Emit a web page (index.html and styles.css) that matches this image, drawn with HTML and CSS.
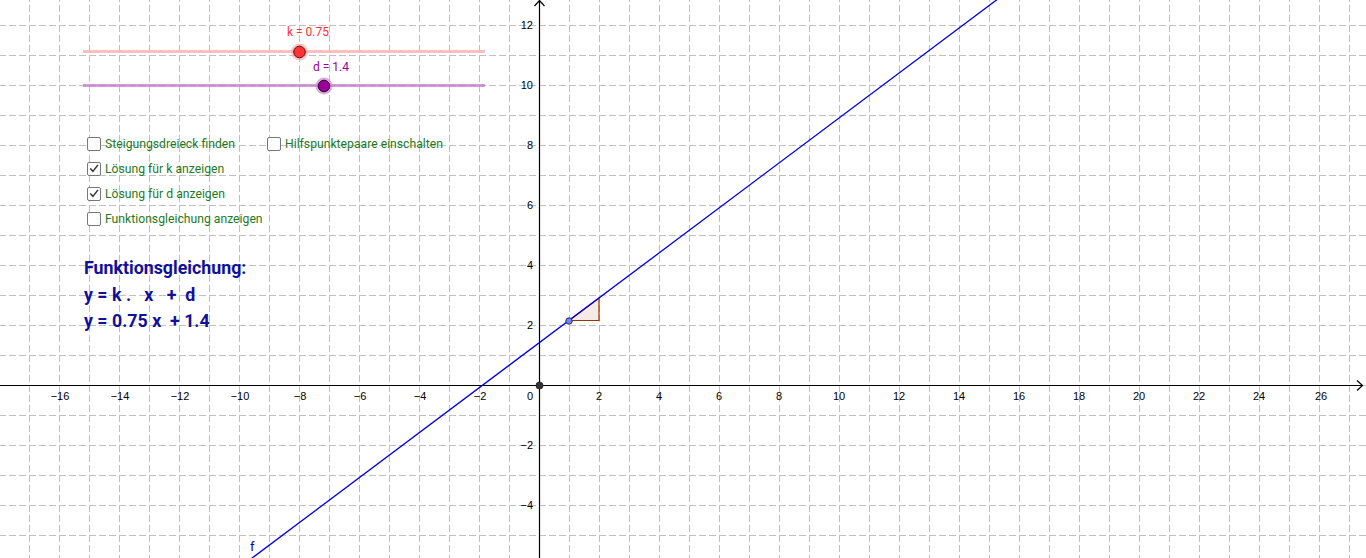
FILE: index.html
```html
<!DOCTYPE html>
<html lang="de">
<head>
<meta charset="utf-8">
<title>Lineare Funktion</title>
<link rel="stylesheet" href="styles.css">
</head>
<body>
<div class="stage">
  <svg class="graph" width="1366" height="558" viewBox="0 0 1366 558" xmlns="http://www.w3.org/2000/svg">
    <defs>
      <pattern id="grid" patternUnits="userSpaceOnUse" x="29" y="25" width="30" height="30">
        <line x1="0.5" y1="0" x2="0.5" y2="30" class="gridline"/>
        <line x1="0" y1="0.5" x2="30" y2="0.5" class="gridline"/>
      </pattern>
    </defs>
    <rect x="0" y="0" width="1366" height="558" fill="#fff"/>
    <rect x="0" y="0" width="1366" height="558" fill="url(#grid)"/>

    <!-- axes -->
    <line x1="0" y1="385.5" x2="1362" y2="385.5" class="axis"/>
    <polyline points="1357,380.5 1362.5,385.5 1357,390.5" class="arrow"/>
    <line x1="539.5" y1="558" x2="539.5" y2="1" class="axis"/>
    <polyline points="534.5,6 539.5,0.5 544.5,6" class="arrow"/>

    <!-- x labels -->
    <g class="xlab">
      <text x="60" y="400">−16</text>
      <text x="120" y="400">−14</text>
      <text x="180" y="400">−12</text>
      <text x="240" y="400">−10</text>
      <text x="300" y="400">−8</text>
      <text x="360" y="400">−6</text>
      <text x="420" y="400">−4</text>
      <text x="480" y="400">−2</text>
      <text x="599" y="400">2</text>
      <text x="659" y="400">4</text>
      <text x="719" y="400">6</text>
      <text x="779" y="400">8</text>
      <text x="839" y="400">10</text>
      <text x="899" y="400">12</text>
      <text x="959" y="400">14</text>
      <text x="1019" y="400">16</text>
      <text x="1079" y="400">18</text>
      <text x="1139" y="400">20</text>
      <text x="1199" y="400">22</text>
      <text x="1259" y="400">24</text>
      <text x="1321" y="400">26</text>
    </g>
    <g class="ylab">
      <text x="533" y="29">12</text>
      <text x="533" y="89">10</text>
      <text x="533" y="149">8</text>
      <text x="533" y="209">6</text>
      <text x="533" y="269">4</text>
      <text x="533" y="329">2</text>
      <text x="533" y="400">0</text>
      <text x="533" y="449">−2</text>
      <text x="533" y="509">−4</text>
    </g>

    <!-- slope triangle -->
    <polygon points="569,320.5 599,320.5 599,298" class="tri"/>

    <!-- function f -->
    <line x1="0" y1="747" x2="1366" y2="-277" class="fline"/>
    <text x="250" y="551" class="flabel">f</text>

    <!-- points -->
    <circle cx="569" cy="321" r="3.2" class="pt"/>
    <circle cx="539.5" cy="385.5" r="3.6" class="origin"/>

    <!-- sliders -->
    <line x1="83" y1="51.5" x2="485" y2="51.5" class="slk"/>
    <circle cx="299.5" cy="52" r="8.5" class="halok"/>
    <circle cx="299.5" cy="52" r="5.8" class="thumbk"/>
    <text x="287" y="36" class="labk">k = 0.75</text>

    <line x1="83" y1="85.5" x2="485" y2="85.5" class="sld"/>
    <circle cx="324" cy="86" r="8.5" class="halod"/>
    <circle cx="324" cy="86" r="5.8" class="thumbd"/>
    <text x="313" y="71" class="labd">d = 1.4</text>
  </svg>

  <div class="controls">
    <div class="row">
      <label class="cb"><span class="box"></span>Steigungsdreieck finden</label>
      <label class="cb second"><span class="box"></span>Hilfspunktepaare einschalten</label>
    </div>
    <div class="row">
      <label class="cb"><span class="box checked"><svg viewBox="0 0 13 13" width="13" height="13"><path d="M2.5 6.5 L5.3 9.6 L10.8 2.6"/></svg></span>Lösung für k anzeigen</label>
    </div>
    <div class="row">
      <label class="cb"><span class="box checked"><svg viewBox="0 0 13 13" width="13" height="13"><path d="M2.5 6.5 L5.3 9.6 L10.8 2.6"/></svg></span>Lösung für d anzeigen</label>
    </div>
    <div class="row">
      <label class="cb"><span class="box"></span>Funktionsgleichung anzeigen</label>
    </div>
  </div>

  <div class="equation">
    <div class="eqline">Funktionsgleichung:</div>
    <div class="eqline">y = k .   x   +  d</div>
    <div class="eqline">y = 0.75 x  + 1.4</div>
  </div>
</div>
</body>
</html>
```
FILE: styles.css
```css
html, body {
  margin: 0;
  padding: 0;
  background: #fff;
  overflow: hidden;
}
.stage {
  position: relative;
  width: 1366px;
  height: 558px;
  font-family: Roboto, "Liberation Sans", sans-serif;
}
.graph {
  display: block;
}
.gridline {
  stroke: #c0c0c0;
  stroke-width: 1;
  stroke-dasharray: 7 3;
}
.axis {
  stroke: #000;
  stroke-width: 1.2;
}
.arrow {
  fill: none;
  stroke: #000;
  stroke-width: 1.2;
}
.xlab text, .ylab text {
  font-family: "Liberation Sans", Arial, sans-serif;
  font-size: 11px;
  fill: #000;
}
.xlab text { text-anchor: middle; }
.ylab text { text-anchor: end; }
.tri {
  fill: rgba(153, 51, 0, 0.1);
  stroke: #993300;
  stroke-width: 1.2;
}
.fline {
  stroke: #0000dd;
  stroke-width: 1.3;
}
.flabel {
  font-family: Roboto, sans-serif;
  font-size: 13px;
  fill: #0000cc;
}
.pt {
  fill: #6f86ff;
  stroke: #2a2a55;
  stroke-width: 1;
}
.origin {
  fill: #333;
  stroke: #111;
  stroke-width: 0.6;
}
.slk {
  stroke: #ffa8a8;
  stroke-opacity: 0.75;
  stroke-width: 3;
}
.halok { fill: #ffaaaa; opacity: 0.7; }
.thumbk {
  fill: #ff3333;
  stroke: #5a1010;
  stroke-width: 1;
}
.labk {
  font-family: Roboto, sans-serif;
  font-size: 12px;
  fill: #ff3333;
}
.sld {
  stroke: #c27ac8;
  stroke-opacity: 0.75;
  stroke-width: 3;
}
.halod { fill: #cc88cc; opacity: 0.7; }
.thumbd {
  fill: #990099;
  stroke: #330033;
  stroke-width: 1;
}
.labd {
  font-family: Roboto, sans-serif;
  font-size: 12px;
  fill: #990099;
}

.controls {
  position: absolute;
  left: 87px;
  top: 134px;
  display: flex;
  flex-direction: column;
  gap: 6px;
}
.row {
  display: flex;
  height: 19px;
  align-items: center;
}
.cb {
  display: flex;
  align-items: center;
  gap: 4px;
  font-size: 12.2px;
  color: #1f7a1f;
  white-space: nowrap;
}
.cb.second {
  margin-left: 32px;
}
.box {
  box-sizing: border-box;
  width: 14px;
  height: 14px;
  border: 1px solid #777;
  border-radius: 2px;
  background: #fff;
  display: flex;
  align-items: center;
  justify-content: center;
}
.box svg {
  display: block;
}
.box svg path {
  fill: none;
  stroke: #333;
  stroke-width: 1.6;
}

.equation {
  position: absolute;
  left: 84px;
  top: 255px;
  display: flex;
  flex-direction: column;
  font-weight: bold;
  font-size: 17.8px;
  color: #101099;
}
.eqline {
  height: 26.5px;
  line-height: 25px;
  white-space: pre;
}
```
